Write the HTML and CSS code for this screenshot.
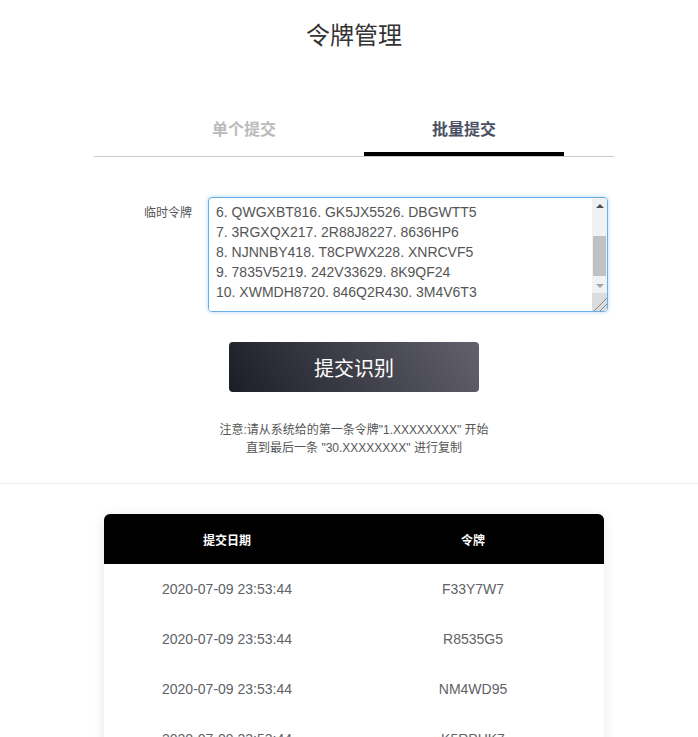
FILE: index.html
```html
<!DOCTYPE html>
<html lang="zh-CN">
<head>
    <meta charset="UTF-8">
    <meta name="viewport" content="width=device-width, initial-scale=1.0">
    <title>令牌管理</title>
    <link rel="stylesheet" href="styles.css">
</head>
<body>
    <div class="page">
        <h1 class="title">令牌管理</h1>

        <div class="tabs">
            <div class="tab">单个提交</div>
            <div class="tab active">批量提交</div>
        </div>

        <div class="form-row">
            <label class="form-label" for="tokens">临时令牌</label>
            <div class="token-box">
                <textarea id="tokens" class="token-input">1. F33Y7W711. HQ2K8ZP21. 5TRW9MX
2. R8535G512. 7XKD4BN22. JP6WQ3C
3. NM4WD9513. B2V8TQL23. 9GXH5KE
4. K5RPHK714. WZ3N6DF24. Q7MC2VA
5. 6HTQ2WB15. PD94XRN25. L8YF3GU
6. QWGXBT816. GK5JX5526. DBGWTT5
7. 3RGXQX217. 2R88J8227. 8636HP6
8. NJNNBY418. T8CPWX228. XNRCVF5
9. 7835V5219. 242V33629. 8K9QF24
10. XWMDH8720. 846Q2R430. 3M4V6T3</textarea>
                <div class="scrollbar">
                    <span class="sb-btn sb-up"></span>
                    <span class="sb-track"><span class="sb-thumb"></span></span>
                    <span class="sb-btn sb-down"></span>
                    <span class="sb-corner"></span>
                </div>
            </div>
        </div>

        <div class="actions">
            <button class="submit-btn">提交识别</button>
        </div>

        <div class="note">
            <p>注意:请从系统给的第一条令牌"1.XXXXXXXX" 开始</p>
            <p>直到最后一条 "30.XXXXXXXX" 进行复制</p>
        </div>
    </div>

    <div class="list-wrap">
        <div class="record-card">
            <div class="record-head">
                <div>提交日期</div>
                <div>令牌</div>
            </div>
            <div class="record-row">
                <div>2020-07-09 23:53:44</div>
                <div>F33Y7W7</div>
            </div>
            <div class="record-row">
                <div>2020-07-09 23:53:44</div>
                <div>R8535G5</div>
            </div>
            <div class="record-row">
                <div>2020-07-09 23:53:44</div>
                <div>NM4WD95</div>
            </div>
            <div class="record-row">
                <div>2020-07-09 23:53:44</div>
                <div>K5RPHK7</div>
            </div>
        </div>
    </div>

    <script>
        // scroll the pasted list to its last lines
        const box = document.getElementById('tokens');
        box.scrollTop = box.scrollHeight;
    </script>
</body>
</html>
```

FILE: styles.css
```css
* {
    box-sizing: border-box;
}

html {
    overflow: hidden;
}

body {
    margin: 0;
    background: #fff;
    font-family: 'Liberation Sans', 'Noto Sans CJK SC', sans-serif;
    color: #333;
}

.page {
    padding-left: 10px;
    border-bottom: 1px solid #eee;
}

.title {
    margin: 20px 0 0;
    font-size: 24px;
    line-height: 32px;
    font-weight: normal;
    text-align: center;
    color: #333;
}

.tabs {
    width: 520px;
    margin: 67px auto 0;
    display: flex;
    justify-content: center;
    gap: 20px;
    border-bottom: 1px solid #ccc;
}

.tab {
    width: 200px;
    padding-bottom: 11px;
    border-bottom: 4px solid transparent;
    font-size: 16px;
    line-height: 22px;
    font-weight: bold;
    text-align: center;
    color: #bbb;
    cursor: pointer;
}

.tab.active {
    color: #4b5163;
    border-bottom-color: #000;
}

.form-row {
    width: 520px;
    margin: 40px auto 0;
    display: flex;
    align-items: flex-start;
}

.form-label {
    width: 114px;
    padding: 7px 16px 0 0;
    font-size: 12px;
    line-height: 18px;
    text-align: right;
    color: #555;
}

.token-box {
    width: 400px;
    height: 115px;
    display: flex;
    border: 1px solid #66afe9;
    border-radius: 4px;
    box-shadow: 0 0 4px rgba(102, 175, 233, 0.5);
    overflow: hidden;
}

.token-input {
    flex: 1;
    margin-top: 6px;
    padding: 0 8px 9px 7px;
    border: none;
    font-family: 'Liberation Sans', 'Noto Sans CJK SC', sans-serif;
    font-size: 14px;
    line-height: 20px;
    color: #555;
    outline: none;
    resize: none;
    overflow: hidden;
    white-space: pre;
}

.scrollbar {
    width: 15px;
    display: flex;
    flex-direction: column;
    background: #f1f1f1;
}

.sb-btn {
    height: 15px;
    display: flex;
    align-items: center;
    justify-content: center;
}

.sb-up {
    height: 16px;
}

.sb-up::before {
    content: "";
    border-left: 4px solid transparent;
    border-right: 4px solid transparent;
    border-bottom: 4px solid #505050;
}

.sb-down::before {
    content: "";
    border-left: 4px solid transparent;
    border-right: 4px solid transparent;
    border-top: 4px solid #a3a3a3;
}

.sb-track {
    flex: 1;
    padding: 22px 1px 0;
}

.sb-thumb {
    display: block;
    height: 40px;
    background: #c1c1c1;
}

.sb-corner {
    height: 18px;
    background: linear-gradient(135deg, #dcdcdc 0 58%, #8a8a8a 58% 63%, #dcdcdc 63% 76%, #8a8a8a 76% 81%, #dcdcdc 81%);
}

.actions {
    margin-top: 30px;
    text-align: center;
}

.submit-btn {
    width: 250px;
    height: 50px;
    border: none;
    border-radius: 4px;
    background: linear-gradient(60deg, #1c1e26, #62616d);
    color: #fff;
    font-family: 'Noto Sans CJK SC', sans-serif;
    font-size: 20px;
    cursor: pointer;
}

.note {
    margin-top: 29px;
    padding-bottom: 26px;
    text-align: center;
    font-size: 12px;
    line-height: 18px;
    color: #555;
}

.note p {
    margin: 0;
}

.list-wrap {
    padding: 30px 0 0 10px;
}

.record-card {
    width: 500px;
    margin: 0 auto;
    border-radius: 6px;
    background: #fff;
    box-shadow: 0 2px 12px rgba(0, 0, 0, 0.1);
    overflow: hidden;
}

.record-head,
.record-row {
    display: grid;
    grid-template-columns: 246px 246px;
    text-align: center;
}

.record-head {
    height: 50px;
    align-items: center;
    background: #000;
    color: #fff;
    font-size: 12px;
    font-weight: bold;
}

.record-row {
    height: 50px;
    align-items: center;
    font-size: 14px;
    color: #606266;
}
```
